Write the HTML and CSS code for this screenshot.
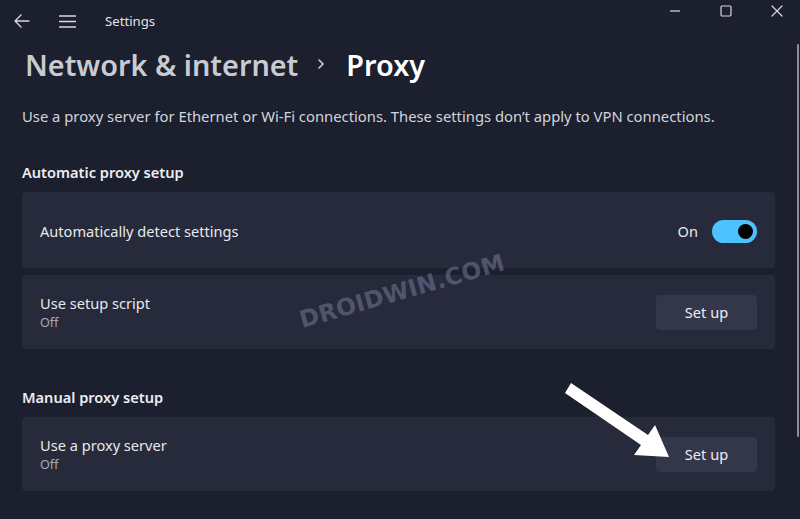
FILE: index.html
```html
<!DOCTYPE html>
<html lang="en">
<head>
<meta charset="utf-8">
<title>Settings - Proxy</title>
<link rel="stylesheet" href="styles.css">
</head>
<body>
<div class="window">
  <header class="titlebar">
    <div class="tb-left">
      <svg class="tb-back" width="16" height="14" viewBox="0 0 16 14"><path d="M7 1 L1 7 L7 13 M1 7 H15" fill="none" stroke="#d8dae0" stroke-width="1.3" stroke-linecap="round" stroke-linejoin="round"/></svg>
      <svg class="tb-menu" width="17" height="13" viewBox="0 0 17 13"><path d="M0.5 1 H16.5 M0.5 6.5 H16.5 M0.5 12 H16.5" fill="none" stroke="#d8dae0" stroke-width="1.3" stroke-linecap="round"/></svg>
      <span class="tb-title">Settings</span>
    </div>
    <div class="tb-controls">
      <svg width="12" height="12" viewBox="0 0 12 12"><path d="M1 6 H11" stroke="#d8dae0" stroke-width="1.2"/></svg>
      <svg width="12" height="12" viewBox="0 0 12 12"><rect x="1" y="1" width="10" height="10" rx="1.2" fill="none" stroke="#d8dae0" stroke-width="1.2"/></svg>
      <svg width="12" height="12" viewBox="0 0 12 12"><path d="M1 1 L11 11 M11 1 L1 11" stroke="#d8dae0" stroke-width="1.2" stroke-linecap="round"/></svg>
    </div>
  </header>

  <main class="content">
    <h1 class="crumbs">
      <span class="crumb-parent">Network &amp; internet</span>
      <svg class="crumb-chev" width="8" height="12" viewBox="0 0 8 12"><path d="M2 2 L6 6 L2 10" fill="none" stroke="#d0d2d8" stroke-width="1.6" stroke-linecap="round" stroke-linejoin="round"/></svg>
      <span class="crumb-current">Proxy</span>
    </h1>
    <p class="desc">Use a proxy server for Ethernet or Wi-Fi connections. These settings don’t apply to VPN connections.</p>

    <h2 class="section">Automatic proxy setup</h2>
    <div class="card card-tall">
      <div class="card-text"><div class="card-title">Automatically detect settings</div></div>
      <div class="card-action">
        <span class="state">On</span>
        <span class="toggle"><span class="knob"></span></span>
      </div>
    </div>
    <div class="card">
      <div class="card-text">
        <div class="card-title">Use setup script</div>
        <div class="card-sub">Off</div>
      </div>
      <button class="btn">Set up</button>
    </div>

    <h2 class="section section-2">Manual proxy setup</h2>
    <div class="card">
      <div class="card-text">
        <div class="card-title">Use a proxy server</div>
        <div class="card-sub">Off</div>
      </div>
      <button class="btn">Set up</button>
    </div>
  </main>

  <div class="watermark">DROIDWIN.COM</div>
  <svg class="arrow" width="800" height="519" viewBox="0 0 800 519"><polygon points="571,383 648,435 655,425 669,457 634,455 641,445 565,393" fill="#ffffff"/></svg>
  <div class="scrollbar"></div>
</div>
</body>
</html>
```

FILE: styles.css
```css
* { box-sizing: border-box; }
html, body { margin: 0; padding: 0; }
body {
  background: #1b1f2e;
  color: #e6e7ea;
  font-family: "Noto Sans", "Open Sans", sans-serif;
  width: 800px;
  height: 519px;
  overflow: hidden;
}
.window { position: relative; width: 800px; height: 519px; }

.titlebar {
  display: flex;
  justify-content: space-between;
  height: 42px;
}
.tb-left {
  display: flex;
  align-items: center;
  padding-left: 14px;
}
.tb-back { display: block; margin-right: 29px; }
.tb-menu { display: block; margin-right: 29px; }
.tb-title { font-size: 13.2px; color: #e2e3e7; }

.tb-controls {
  display: flex;
  align-items: center;
  gap: 39px;
  height: 21px;
  padding-right: 17px;
}
.tb-controls svg { display: block; }

.content { padding: 0 25px 0 22px; }

.crumbs {
  display: flex;
  align-items: center;
  margin: 0 0 0 3px;
  height: 44px;
  font-size: 28.8px;
  font-weight: 600;
  letter-spacing: 0;
}
.crumb-parent { color: #c9cbd1; }
.crumb-chev { margin: 0 21px 0 19px; }
.crumb-current { color: #ffffff; }

.desc {
  margin: 20px 0 0 0;
  font-size: 14.8px;
  color: #d3d5da;
  line-height: 20px;
}

.section {
  margin: 36px 0 10px 0;
  font-size: 14.6px;
  font-weight: 600;
  color: #eceef1;
  line-height: 20px;
}
.section-2 { margin-top: 38px; }

.card {
  display: flex;
  align-items: center;
  justify-content: space-between;
  height: 74px;
  margin-bottom: 7px;
  padding: 0 18px 0 18px;
  background: #262a3b;
  border-radius: 4px;
}
.card-tall { height: 76px; }
.card-text { padding-top: 3px; }
.card-title { font-size: 14.6px; color: #e8e9ec; line-height: 19px; }
.card-sub { font-size: 12.6px; color: #a9abb3; line-height: 20px; }

.card-action { display: flex; align-items: center; padding-top: 2px; }
.state { font-size: 14.6px; color: #e8e9ec; margin-right: 14px; }
.toggle {
  position: relative;
  display: block;
  width: 45px;
  height: 23px;
  border-radius: 12px;
  background: #4cc2ff;
}
.knob {
  position: absolute;
  right: 4px;
  top: 4px;
  width: 15px;
  height: 15px;
  border-radius: 50%;
  background: #000000;
}

.btn {
  width: 101px;
  height: 35px;
  border: none;
  border-radius: 4px;
  background: #34374a;
  color: #eceef1;
  font-family: inherit;
  font-size: 14.6px;
  padding: 0;
}

.watermark {
  position: absolute;
  left: 296px;
  top: 278px;
  width: 206px;
  text-align: center;
  font-family: "DejaVu Sans", sans-serif;
  font-weight: 700;
  font-size: 23.5px;
  letter-spacing: 0.2px;
  color: rgba(118, 124, 152, 0.55);
  transform: rotate(-16deg);
  white-space: nowrap;
}
.arrow { position: absolute; left: 0; top: 0; pointer-events: none; }
.scrollbar {
  position: absolute;
  right: 1px;
  top: 44px;
  width: 2px;
  height: 393px;
  background: #8b8e98;
  border-radius: 1px;
}
```
